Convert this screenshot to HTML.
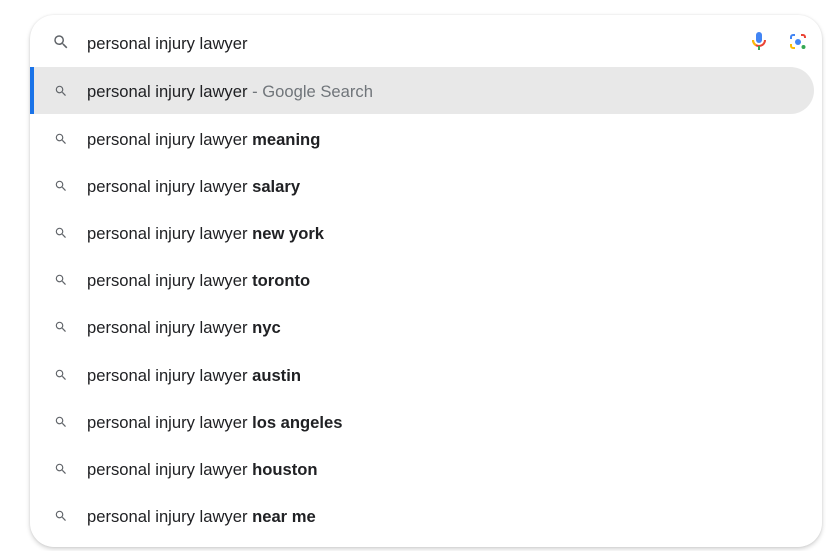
<!DOCTYPE html>
<html><head><style>
body{margin:0;width:826px;height:551px;background:#fff;font-family:"Liberation Sans",Arial,sans-serif;overflow:hidden;position:relative}
.card{position:absolute;left:30px;top:15px;width:792px;height:532px;border-radius:24px;background:#fff;box-shadow:0 2px 5px rgba(0,0,0,.18),0 0 2px rgba(0,0,0,.08)}
.row{position:absolute;left:0;height:47px;width:784px;display:flex;align-items:center;font-size:16.6px;color:#202124}
.row .t{position:absolute;left:57px;top:15px;line-height:19px}
.row svg{position:absolute;left:24px}
b{font-weight:bold}
.hl{background:#e8e8e8;border-radius:0 24px 24px 0}
.hl:before{content:"";position:absolute;left:0;top:0;width:4px;height:47px;background:#1a73e8}
.g{color:#70757a}
</style></head><body>
<svg width="0" height="0" style="position:absolute"><defs><path id="m" fill="#5f6368" d="M15.5 14h-.79l-.28-.27A6.47 6.47 0 0 0 16 9.5 6.5 6.5 0 1 0 9.5 16c1.61 0 3.09-.59 4.23-1.57l.27.28v.79l5 4.99L20.49 19l-4.99-5zm-6 0C7.01 14 5 11.99 5 9.5S7.01 5 9.5 5 14 7.01 14 9.5 11.99 14 9.5 14z"/></defs></svg>
<div class="card">
<div class="row" style="top:4px;height:46px"><svg style="left:22px" width="18" height="18" viewBox="0 0 24 24"><use href="#m"/></svg><span class="t">personal injury lawyer</span>
<svg style="left:720px" width="18" height="22" viewBox="0 0 18 22"><rect x="6" y="1" width="6" height="11" rx="3" fill="#4285f4"/><path d="M3 9a6 6 0 0 0 12 0" stroke="#ea4335" stroke-width="2" fill="none"/><path d="M3 9a6 6 0 0 0 3 5.2" stroke="#fbbc04" stroke-width="2" fill="none"/><rect x="8" y="15" width="2" height="4" fill="#34a853"/></svg>
<svg style="left:758px" width="20" height="20" viewBox="0 0 20 20"><path d="M3 7V5a2 2 0 0 1 2-2h2" stroke="#4285f4" stroke-width="2" fill="none"/><path d="M13 3h2a2 2 0 0 1 2 2v1" stroke="#ea4335" stroke-width="2" fill="none"/><path d="M3 12v2a2 2 0 0 0 2 2h2" stroke="#fbbc04" stroke-width="2" fill="none"/><circle cx="10" cy="10" r="3" fill="#4285f4"/><circle cx="15.5" cy="15" r="2" fill="#34a853"/></svg>
</div>
<div class="row hl" style="top:52px"><svg width="14" height="14" viewBox="0 0 24 24"><use href="#m"/></svg><span class="t">personal injury lawyer<span class="g"> - Google Search</span></span></div>
<div class="row" style="top:100px"><svg width="14" height="14" viewBox="0 0 24 24"><use href="#m"/></svg><span class="t">personal injury lawyer <b>meaning</b></span></div>
<div class="row" style="top:147px"><svg width="14" height="14" viewBox="0 0 24 24"><use href="#m"/></svg><span class="t">personal injury lawyer <b>salary</b></span></div>
<div class="row" style="top:194px"><svg width="14" height="14" viewBox="0 0 24 24"><use href="#m"/></svg><span class="t">personal injury lawyer <b>new york</b></span></div>
<div class="row" style="top:241px"><svg width="14" height="14" viewBox="0 0 24 24"><use href="#m"/></svg><span class="t">personal injury lawyer <b>toronto</b></span></div>
<div class="row" style="top:288px"><svg width="14" height="14" viewBox="0 0 24 24"><use href="#m"/></svg><span class="t">personal injury lawyer <b>nyc</b></span></div>
<div class="row" style="top:336px"><svg width="14" height="14" viewBox="0 0 24 24"><use href="#m"/></svg><span class="t">personal injury lawyer <b>austin</b></span></div>
<div class="row" style="top:383px"><svg width="14" height="14" viewBox="0 0 24 24"><use href="#m"/></svg><span class="t">personal injury lawyer <b>los angeles</b></span></div>
<div class="row" style="top:430px"><svg width="14" height="14" viewBox="0 0 24 24"><use href="#m"/></svg><span class="t">personal injury lawyer <b>houston</b></span></div>
<div class="row" style="top:477px"><svg width="14" height="14" viewBox="0 0 24 24"><use href="#m"/></svg><span class="t">personal injury lawyer <b>near me</b></span></div>
</div>
</body></html>
